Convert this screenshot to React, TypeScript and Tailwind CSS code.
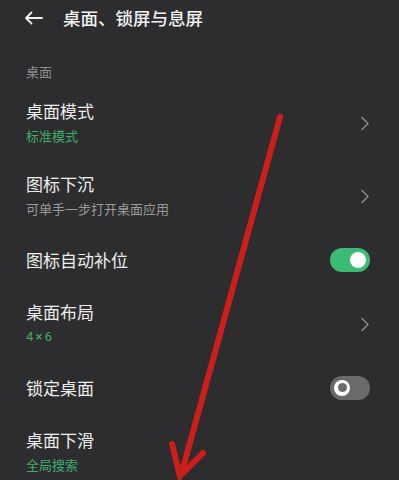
import React from "react";

const font = { fontFamily: '"Noto Sans CJK SC", "Noto Sans", sans-serif' };

function Chevron() {
  return (
    <svg width="10" height="15" viewBox="0 0 10 15" className="shrink-0">
      <path d="M2 1.5 L8 7.5 L2 13.5" fill="none" stroke="#8a8a8c" strokeWidth="1.6" strokeLinecap="round" strokeLinejoin="round" />
    </svg>
  );
}

function ToggleOn() {
  return (
    <div className="w-[40px] h-[24px] rounded-full bg-[#3dba74] flex items-center justify-end pr-[4px]">
      <div className="w-[16px] h-[16px] rounded-full bg-white" />
    </div>
  );
}

function ToggleOff() {
  return (
    <div className="w-[40px] h-[24px] rounded-full bg-[#6a6a6c] flex items-center pl-[4px]">
      <div className="w-[16px] h-[16px] rounded-full bg-white flex items-center justify-center">
        <div className="w-[9px] h-[9px] rounded-full bg-[#6a6a6c]" />
      </div>
    </div>
  );
}

function DoubleRow({ title, sub, green, right, subClass }: { title: string; sub: string; green?: boolean; right: React.ReactNode; subClass?: string }) {
  return (
    <div className="h-[73px] flex items-center pl-[26px] pr-[29px]">
      <div className="flex-1 flex flex-col">
        <div className="text-[17px] leading-[24px] text-[#ededed]">{title}</div>
        <div className={"text-[13px] leading-[20px] mt-[3px] " + (green ? "text-[#3fae6c] " : "text-[#9a9a9c] ") + (subClass ?? "")}>{sub}</div>
      </div>
      <div className="pt-[2px]">{right}</div>
    </div>
  );
}

function SingleRow({ title, right }: { title: string; right: React.ReactNode }) {
  return (
    <div className="h-[55px] flex items-center pl-[26px] pr-[29px]">
      <div className="flex-1 text-[17px] leading-[24px] text-[#ededed]">{title}</div>
      {right}
    </div>
  );
}

export default function App() {
  return (
    <div className="relative w-[399px] h-[480px] overflow-hidden bg-[#2d2d2f]" style={font}>
      <div className="h-[36px] flex items-center pl-[24px]">
        <svg width="19" height="14" viewBox="0 0 19 14" className="shrink-0">
          <path d="M18 7 H2 M7.5 1.5 L2 7 L7.5 12.5" fill="none" stroke="#f2f2f2" strokeWidth="1.8" strokeLinecap="round" strokeLinejoin="round" />
        </svg>
        <div className="ml-[20px] text-[17.5px] font-medium text-[#f2f2f2] leading-[24px]">桌面、锁屏与息屏</div>
      </div>
      <div className="h-[50px] pt-[27px] pl-[26px]">
        <div className="text-[13px] leading-[18px] text-[#8c8c8e]">桌面</div>
      </div>
      <DoubleRow title="桌面模式" sub="标准模式" green right={<Chevron />} />
      <DoubleRow title="图标下沉" sub="可单手一步打开桌面应用" right={<Chevron />} />
      <SingleRow title="图标自动补位" right={<ToggleOn />} />
      <DoubleRow title="桌面布局" sub="4 × 6" green subClass="font-['Roboto'] tracking-[-0.5px]" right={<Chevron />} />
      <SingleRow title="锁定桌面" right={<ToggleOff />} />
      <DoubleRow title="桌面下滑" sub="全局搜索" green right={<span />} />

      <svg className="absolute left-0 top-0 pointer-events-none" width="399" height="480" viewBox="0 0 399 480">
        <path d="M280 117 L183 468" fill="none" stroke="#cc1f1c" strokeWidth="6" strokeLinecap="round" />
        <path d="M172 444 L180 476 L203 453" fill="none" stroke="#cc1f1c" strokeWidth="6" strokeLinecap="round" strokeLinejoin="miter" />
      </svg>
    </div>
  );
}
